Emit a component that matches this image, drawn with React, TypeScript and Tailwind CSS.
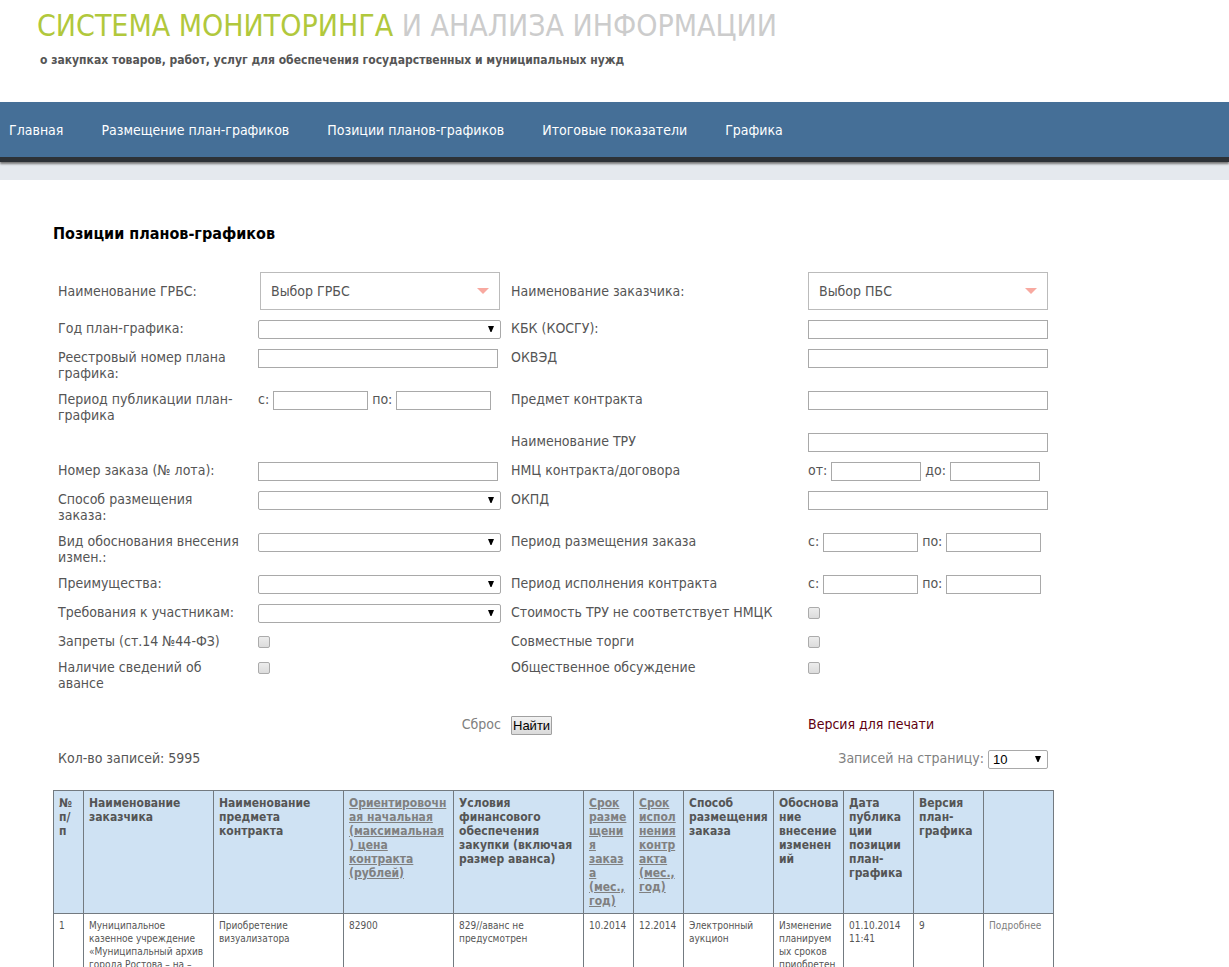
import { Fragment, useState } from 'react';
import type { ReactNode } from 'react';

const navItems = [
  'Главная',
  'Размещение план-графиков',
  'Позиции планов-графиков',
  'Итоговые показатели',
  'Графика',
];

const inputClass = 'block h-[19px] border border-[#a9a9a9] bg-white px-1 text-[13px] text-black';

function TextField({ id }: { id: string }) {
  return <input id={id} type="text" className={`${inputClass} w-full max-w-[240px]`} />;
}

function Arrow() {
  return (
    <svg
      aria-hidden="true"
      viewBox="0 0 6 6"
      className="pointer-events-none absolute top-[6px] right-[7px] h-[6px] w-[6px]"
    >
      <path d="M0 0H6L3.5 6H2.5Z" fill="#000" />
    </svg>
  );
}

function SelectField({ id }: { id: string }) {
  return (
    <div className="relative w-full max-w-[243px]">
      <select
        id={id}
        className="block h-[19px] w-full appearance-none rounded-[2px] border border-[#a9a9a9] bg-white pl-1 text-[13px] text-black"
      >
        <option value="" />
      </select>
      <Arrow />
    </div>
  );
}

function CheckField({ id }: { id: string }) {
  const [on, setOn] = useState(false);
  return (
    <input
      id={id}
      type="checkbox"
      checked={on}
      onChange={(e) => setOn(e.target.checked)}
      className="mt-[3px] block h-3 w-3 appearance-none rounded-[2px] border border-[#ababab] bg-linear-to-b from-[#ededed] to-[#dcdcdc] checked:from-[#456f97] checked:to-[#456f97]"
    />
  );
}

function RangeField({
  id,
  from,
  to,
  narrow = false,
}: {
  id: string;
  from: string;
  to: string;
  narrow?: boolean;
}) {
  const width = narrow ? 'w-[90px]' : 'w-[95px]';
  return (
    <div className="flex gap-1 whitespace-nowrap">
      <label htmlFor={id}>{from}</label>
      <input id={id} type="text" className={`${inputClass} ${width}`} />
      <label htmlFor={`${id}-end`}>{to}</label>
      <input id={`${id}-end`} type="text" className={`${inputClass} ${width}`} />
    </div>
  );
}

function Picker({ id, text }: { id: string; text: string }) {
  return (
    <button
      id={id}
      type="button"
      className="flex h-[38px] w-full max-w-[240px] items-center justify-between border border-[#bbb] bg-white px-[10px] text-left"
    >
      {text}
      <svg aria-hidden="true" viewBox="0 0 12 6" className="h-[6px] w-3">
        <path d="M0 0H12L6 6Z" fill="#f8a9a0" />
      </svg>
    </button>
  );
}

type Cell = { id: string; label: string; field: ReactNode } | null;

const rows: [Cell, Cell][] = [
  [
    { id: 'year', label: 'Год план-графика:', field: <SelectField id="year" /> },
    { id: 'kbk', label: 'КБК (КОСГУ):', field: <TextField id="kbk" /> },
  ],
  [
    { id: 'reg', label: 'Реестровый номер плана\nграфика:', field: <TextField id="reg" /> },
    { id: 'okved', label: 'ОКВЭД', field: <TextField id="okved" /> },
  ],
  [
    {
      id: 'pub',
      label: 'Период публикации план-\nграфика',
      field: <RangeField id="pub" from="с:" to="по:" />,
    },
    { id: 'subject', label: 'Предмет контракта', field: <TextField id="subject" /> },
  ],
  [null, { id: 'tru', label: 'Наименование ТРУ', field: <TextField id="tru" /> }],
  [
    { id: 'lot', label: 'Номер заказа (№ лота):', field: <TextField id="lot" /> },
    {
      id: 'price',
      label: 'НМЦ контракта/договора',
      field: <RangeField id="price" from="от:" to="до:" narrow />,
    },
  ],
  [
    { id: 'method', label: 'Способ размещения\nзаказа:', field: <SelectField id="method" /> },
    { id: 'okpd', label: 'ОКПД', field: <TextField id="okpd" /> },
  ],
  [
    { id: 'reason', label: 'Вид обоснования внесения\nизмен.:', field: <SelectField id="reason" /> },
    {
      id: 'placing',
      label: 'Период размещения заказа',
      field: <RangeField id="placing" from="с:" to="по:" />,
    },
  ],
  [
    { id: 'benefits', label: 'Преимущества:', field: <SelectField id="benefits" /> },
    {
      id: 'execution',
      label: 'Период исполнения контракта',
      field: <RangeField id="execution" from="с:" to="по:" />,
    },
  ],
  [
    { id: 'demands', label: 'Требования к участникам:', field: <SelectField id="demands" /> },
    { id: 'cost', label: 'Стоимость ТРУ не соответствует НМЦК', field: <CheckField id="cost" /> },
  ],
  [
    { id: 'bans', label: 'Запреты (ст.14 №44-ФЗ)', field: <CheckField id="bans" /> },
    { id: 'joint', label: 'Совместные торги', field: <CheckField id="joint" /> },
  ],
  [
    { id: 'advance', label: 'Наличие сведений об\nавансе', field: <CheckField id="advance" /> },
    { id: 'public', label: 'Общественное обсуждение', field: <CheckField id="public" /> },
  ],
];

function FormCell({ cell }: { cell: Cell }) {
  if (!cell) {
    return (
      <>
        <div />
        <div />
      </>
    );
  }
  return (
    <>
      <div className="p-[5px] whitespace-pre">
        <label htmlFor={cell.id}>{cell.label}</label>
      </div>
      <div className="p-[5px]">{cell.field}</div>
    </>
  );
}

const columns: { title: string; width: string; sortable?: boolean }[] = [
  { title: '№\nп/\nп', width: 'w-[3%]' },
  { title: 'Наименование\nзаказчика', width: 'w-[13%]' },
  { title: 'Наименование\nпредмета\nконтракта', width: 'w-[13%]' },
  {
    title: 'Ориентировочн\nая начальная\n(максимальная\n) цена\nконтракта\n(рублей)',
    width: 'w-[11%]',
    sortable: true,
  },
  {
    title: 'Условия\nфинансового\nобеспечения\nзакупки (включая\nразмер аванса)',
    width: 'w-[13%]',
  },
  { title: 'Срок\nразме\nщени\nя\nзаказ\nа\n(мес.,\nгод)', width: 'w-[5%]', sortable: true },
  { title: 'Срок\nиспол\nнения\nконтр\nакта\n(мес.,\nгод)', width: 'w-[5%]', sortable: true },
  { title: 'Способ\nразмещения\nзаказа', width: 'w-[9%]' },
  { title: 'Обоснова\nние\nвнесение\nизменен\nий', width: 'w-[7%]' },
  { title: 'Дата\nпублика\nции\nпозиции\nплан-\nграфика', width: 'w-[7%]' },
  { title: 'Версия\nплан-\nграфика', width: 'w-[7%]' },
  { title: '', width: 'w-[7%]' },
];

const record = [
  '1',
  'Муниципальное\nказенное учреждение\n«Муниципальный архив\nгорода Ростова – на –',
  'Приобретение\nвизуализатора',
  '82900',
  '829//аванс не\nпредусмотрен',
  '10.2014',
  '12.2014',
  'Электронный\nаукцион',
  'Изменение\nпланируем\nых сроков\nприобретен',
  '01.10.2014\n11:41',
  '9',
];

export default function App() {
  return (
    <div className="bg-white font-['DejaVu_Sans_Condensed','DejaVu_Sans',sans-serif] text-[14px] leading-4 text-[#555]">
      <header className="h-[102px] pt-2 pl-[37px]">
        <h1 className="text-[30px] leading-9 whitespace-nowrap text-[#ccc]">
          <span className="text-[#b1c83c]">СИСТЕМА МОНИТОРИНГА</span> И АНАЛИЗА ИНФОРМАЦИИ
        </h1>
        <p className="mt-2 pl-[3px] text-[12px] leading-4 font-bold whitespace-nowrap">
          о закупках товаров, работ, услуг для обеспечения государственных и муниципальных нужд
        </p>
      </header>

      <div className="bg-[#e5e9ee] pb-[18px]">
        <nav className="flex h-[60px] items-center gap-[38px] border-b-[5px] border-[#2d3237] bg-[#456f97] pl-[9px] whitespace-nowrap text-white shadow-[0_2px_2px_#777]">
          {navItems.map((item) => (
            <a key={item} href="#">
              {item}
            </a>
          ))}
        </nav>
      </div>

      <main className="max-w-[1054px] pt-11 pl-[53px]">
        <h2 className="text-[16px] leading-5 font-bold text-black">Позиции планов-графиков</h2>

        <form className="mt-[23px]" onSubmit={(e) => e.preventDefault()}>
          <div className="grid grid-cols-[200px_253px_297px_250px]">
            <div className="self-center p-[5px]">
              <label htmlFor="grbs">Наименование ГРБС:</label>
            </div>
            <div className="py-[5px] pl-[7px]">
              <Picker id="grbs" text="Выбор ГРБС" />
            </div>
            <div className="self-center p-[5px]">
              <label htmlFor="pbs">Наименование заказчика:</label>
            </div>
            <div className="p-[5px]">
              <Picker id="pbs" text="Выбор ПБС" />
            </div>
            {rows.map(([left, right], i) => (
              <Fragment key={i}>
                <FormCell cell={left} />
                <FormCell cell={right} />
              </Fragment>
            ))}
          </div>

          <div className="mt-[15px] grid grid-cols-[453px_297px_250px]">
            <div className="p-[5px] text-right">
              <a href="#" className="text-[#808080]">
                Сброс
              </a>
            </div>
            <div className="p-[5px]">
              <button
                type="submit"
                className="block h-[19px] rounded-[1px] border border-[#a0a0a0] bg-linear-to-b from-[#f2f2f2] to-[#dadada] px-px font-['Liberation_Sans',Arial,sans-serif] text-[13px] leading-4 text-black"
              >
                Найти
              </button>
            </div>
            <div className="p-[5px]">
              <a href="#" className="text-[#600010]">
                Версия для печати
              </a>
            </div>
          </div>

          <div className="mt-[5px] flex justify-between py-[5px] pr-[6px] pl-[5px]">
            <span>Кол-во записей: 5995</span>
            <div className="flex gap-1 text-[#808080]">
              <label htmlFor="per-page">Записей на страницу:</label>
              <div className="relative w-[60px]">
                <select
                  id="per-page"
                  className="block h-[19px] w-full appearance-none rounded-[2px] border border-[#a9a9a9] bg-white pl-1 font-['Liberation_Sans',Arial,sans-serif] text-[13px] leading-4 text-black"
                >
                  <option>10</option>
                  <option>20</option>
                </select>
                <Arrow />
              </div>
            </div>
          </div>
        </form>

        <table className="mt-4 w-full table-fixed border-collapse text-left align-top">
          <thead className="bg-[#cfe2f3] text-[12px] leading-[14px]">
            <tr>
              {columns.map((col, i) => (
                <th
                  key={i}
                  className={`${col.width} border border-[#737a80] p-[5px] align-top font-bold whitespace-pre`}
                >
                  {col.sortable ? (
                    <a href="#" className="text-[#808080] underline">
                      {col.title}
                    </a>
                  ) : (
                    col.title
                  )}
                </th>
              ))}
            </tr>
          </thead>
          <tbody className="text-[10px] leading-[13px]">
            <tr>
              {record.map((value, i) => (
                <td key={i} className="border border-[#737a80] p-[5px] align-top whitespace-pre">
                  {value}
                </td>
              ))}
              <td className="border border-[#737a80] p-[5px] align-top">
                <a href="#" className="text-[#808080]">
                  Подробнее
                </a>
              </td>
            </tr>
          </tbody>
        </table>
      </main>
    </div>
  );
}
